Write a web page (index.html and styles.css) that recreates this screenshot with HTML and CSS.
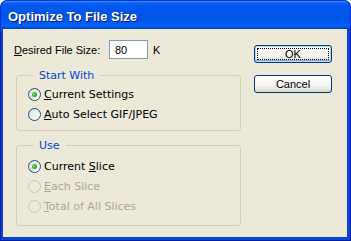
FILE: index.html
```html
<!DOCTYPE html>
<html>
<head>
<meta charset="utf-8">
<link rel="stylesheet" href="styles.css">
</head>
<body>
<div class="window">
  <div class="titlebar"><span class="title">Optimize To File Size</span></div>
  <div class="frame">
    <div class="client">
      <div class="left">
        <div class="size-row">
          <span class="lbl"><u>D</u>esired File Size:</span>
          <span class="input">80</span>
          <span class="unit">K</span>
        </div>
        <fieldset class="group group-start">
          <legend>Start With</legend>
          <div class="radio-row"><span class="radio checked"></span><span class="rlabel"><u>C</u>urrent Settings</span></div>
          <div class="radio-row"><span class="radio"></span><span class="rlabel"><u>A</u>uto Select GIF/JPEG</span></div>
        </fieldset>
        <fieldset class="group group-use">
          <legend>Use</legend>
          <div class="radio-row"><span class="radio checked"></span><span class="rlabel">Current <u>S</u>lice</span></div>
          <div class="radio-row disabled"><span class="radio"></span><span class="rlabel"><u>E</u>ach Slice</span></div>
          <div class="radio-row disabled"><span class="radio"></span><span class="rlabel"><u>T</u>otal of All Slices</span></div>
        </fieldset>
      </div>
      <div class="right">
        <div class="btn default"><span class="focus">OK</span></div>
        <div class="btn">Cancel</div>
      </div>
    </div>
  </div>
</div>
</body>
</html>
```
FILE: styles.css
```css
html, body {
  margin: 0;
  padding: 0;
  background: #ffffff;
}
.window {
  width: 351px;
  height: 241px;
  display: flex;
  flex-direction: column;
  border-radius: 7px 7px 0 0;
  overflow: hidden;
  background: #0842D6;
}
.titlebar {
  height: 29px;
  box-sizing: border-box;
  padding: 2px 0 0 7px;
  display: flex;
  align-items: center;
  background: linear-gradient(to bottom, #3D95FF 0px, #0A63F5 2px, #0058EE 4px, #0055E9 50%, #0057EE 75%, #0164FA 88%, #0052DE 95%, #003DC0 100%);
  border: 1px solid #0831D9;
  border-bottom: 0;
  border-radius: 7px 7px 0 0;
}
.title {
  font-family: "Liberation Sans", Arial, sans-serif;
  font-weight: bold;
  font-size: 13px;
  color: #ffffff;
  text-shadow: 1px 1px #0A1883;
}
.frame {
  flex: 1;
  display: flex;
  border: 1px solid #001EA0;
  border-top: 0;
  padding: 0 3px 3px 2px;
  background: #0845D8;
}
.client {
  flex: 1;
  display: flex;
  background: #ECE9D8;
  padding: 11px 0 0 11px;
  font-family: "Liberation Sans", Arial, sans-serif;
  font-size: 11px;
  color: #000000;
}
.left {
  width: 227px;
  display: flex;
  flex-direction: column;
}
.size-row {
  display: flex;
  align-items: center;
  height: 19px;
}
.lbl {
  width: 95px;
}
.input {
  box-sizing: border-box;
  width: 39px;
  height: 19px;
  border: 1px solid #7F9DB9;
  background: #ffffff;
  padding-left: 5px;
  display: flex;
  align-items: center;
}
.unit {
  margin-left: 5px;
}
.group {
  box-sizing: border-box;
  width: 225px;
  margin: 0 0 0 2px;
  border: 1px solid #D0D0BF;
  border-radius: 3px;
  padding: 0;
  font-family: "DejaVu Sans", Verdana, sans-serif;
  font-size: 11px;
}
.group legend {
  margin-left: 16px;
  padding: 0 6px;
  line-height: 13px;
  color: #0046D5;
}
.group-start {
  margin-top: 10px;
  padding: 2px 0 6px 0;
}
.group-use {
  margin-top: 8px;
  padding: 4px 0 9px 0;
}
.radio-row {
  height: 20px;
  display: flex;
  align-items: center;
  padding-left: 11px;
}
.radio {
  box-sizing: border-box;
  width: 13px;
  height: 13px;
  border-radius: 50%;
  border: 1px solid #1C5180;
  background: linear-gradient(135deg, #DCDCD7 0%, #F4F4F2 60%, #FFFFFF 100%);
  margin-right: 3px;
  display: flex;
  align-items: center;
  justify-content: center;
}
.radio.checked::after {
  content: "";
  width: 5px;
  height: 5px;
  border-radius: 50%;
  background: radial-gradient(circle at 40% 40%, #5EE35A 0%, #21A121 70%, #1A8A1A 100%);
}
.disabled .radio {
  border-color: #CAC8BB;
  background: #ECE9D8;
}
.disabled .rlabel {
  color: #ACA899;
}
.right {
  margin-left: 13px;
  padding-top: 5px;
  display: flex;
  flex-direction: column;
  gap: 12px;
}
.btn {
  box-sizing: border-box;
  width: 78px;
  height: 18px;
  border: 1px solid #003C74;
  border-radius: 3px;
  background: linear-gradient(to bottom, #FFFFFF 0%, #F4F4F0 60%, #E6E4DC 85%, #D6D0C5 100%);
  display: flex;
  align-items: center;
  justify-content: center;
}
.btn.default {
  padding: 2px;
  box-shadow: inset 0 0 0 1px #B8D6FB, inset 0 -1px 0 1px #89ADE4;
}
.focus {
  flex: 1;
  align-self: stretch;
  display: flex;
  align-items: center;
  justify-content: center;
  border: 1px dotted #000000;
}
```
